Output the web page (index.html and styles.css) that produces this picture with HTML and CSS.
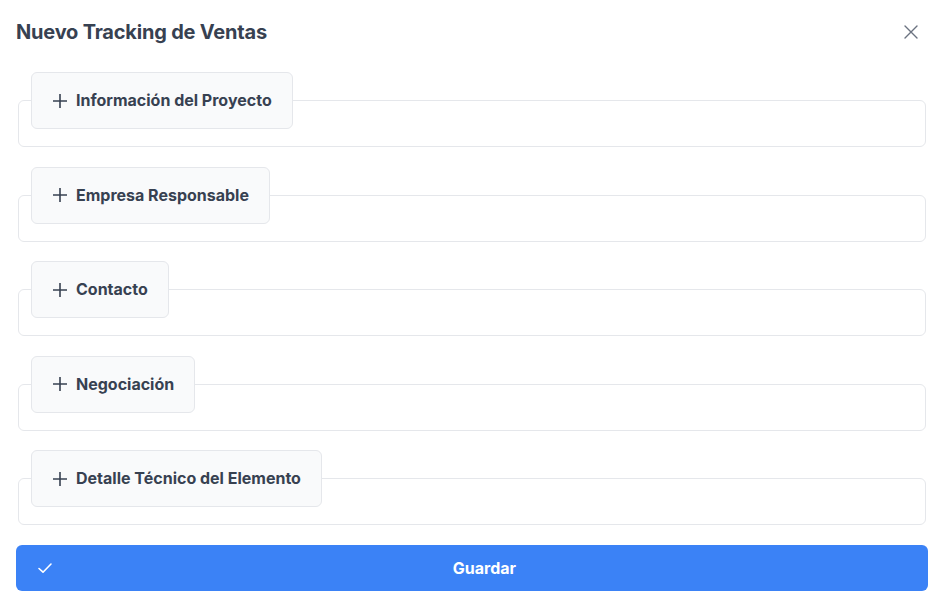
FILE: index.html
```html
<!DOCTYPE html>
<html lang="es">
<head>
<meta charset="utf-8">
<title>Nuevo Tracking de Ventas</title>
<link rel="stylesheet" href="styles.css">
</head>
<body>
<div class="dialog">
  <header class="dialog-header">
    <h1 class="dialog-title">Nuevo Tracking de Ventas</h1>
    <button class="close-btn" aria-label="Cerrar">
      <svg width="14" height="14" viewBox="0 0 14 14"><path d="M1 1L13 13M13 1L1 13" stroke="currentColor" stroke-width="1.4" stroke-linecap="round"/></svg>
    </button>
  </header>
  <div class="dialog-content">
    <fieldset class="panel"><legend class="panel-legend"><svg class="plus" width="16" height="16" viewBox="0 0 16 16"><path d="M8 1V15M1 8H15" stroke="currentColor" stroke-width="1.6"/></svg><span>Información del Proyecto</span></legend></fieldset>
    <fieldset class="panel"><legend class="panel-legend"><svg class="plus" width="16" height="16" viewBox="0 0 16 16"><path d="M8 1V15M1 8H15" stroke="currentColor" stroke-width="1.6"/></svg><span>Empresa Responsable</span></legend></fieldset>
    <fieldset class="panel"><legend class="panel-legend"><svg class="plus" width="16" height="16" viewBox="0 0 16 16"><path d="M8 1V15M1 8H15" stroke="currentColor" stroke-width="1.6"/></svg><span>Contacto</span></legend></fieldset>
    <fieldset class="panel"><legend class="panel-legend"><svg class="plus" width="16" height="16" viewBox="0 0 16 16"><path d="M8 1V15M1 8H15" stroke="currentColor" stroke-width="1.6"/></svg><span>Negociación</span></legend></fieldset>
    <fieldset class="panel"><legend class="panel-legend"><svg class="plus" width="16" height="16" viewBox="0 0 16 16"><path d="M8 1V15M1 8H15" stroke="currentColor" stroke-width="1.6"/></svg><span>Detalle Técnico del Elemento</span></legend></fieldset>
    <button class="save-btn">
      <svg class="check" width="16" height="16" viewBox="0 0 16 16"><path d="M2 8.5L6 12.2L14 4" stroke="currentColor" stroke-width="1.6" fill="none" stroke-linecap="round" stroke-linejoin="round"/></svg>
      <span class="save-label">Guardar</span>
    </button>
  </div>
</div>
</body>
</html>
```

FILE: styles.css
```css
* { box-sizing: border-box; }
html, body { margin: 0; padding: 0; background: #ffffff; }
body {
  font-family: Inter, "Noto Sans", "Liberation Sans", sans-serif;
  color: #374151;
  width: 944px;
  height: 614px;
  overflow: hidden;
}
.dialog { padding: 0 16px; }
.dialog-header {
  display: flex;
  align-items: center;
  justify-content: space-between;
  height: 64px;
  margin-bottom: 8px;
}
.dialog-title {
  margin: 0;
  font-size: 20px;
  font-weight: 700;
  color: #374151;
  letter-spacing: -0.2px;
}
.close-btn {
  border: 0;
  background: transparent;
  color: #6b7280;
  width: 32px;
  height: 32px;
  display: flex;
  align-items: center;
  justify-content: center;
  padding: 0;
  margin-right: 1px;
}
.dialog-content { display: flex; flex-direction: column; }
.panel {
  margin: 0 2px 19.5px;
  padding: 0 12px 17px;
  border: 1px solid #e5e7eb;
  border-radius: 6px;
  min-height: 0;
}
.panel-legend {
  display: flex;
  align-items: center;
  gap: 8px;
  padding: 19px 20px;
  background: #f9fafb;
  border: 1px solid #e5e7eb;
  border-radius: 6px;
  font-size: 16px;
  font-weight: 700;
  line-height: 17px;
  color: #374151;
}
.plus { color: #374151; flex: none; }
.save-btn {
  height: 46px;
  width: 100%;
  border: 0;
  border-radius: 6px;
  background: #3b82f6;
  color: #ffffff;
  display: flex;
  align-items: center;
  gap: 8px;
  padding: 0 20px;
  font-family: inherit;
  font-size: 16px;
  font-weight: 700;
}
.check { flex: none; margin-left: 1px; }
.save-label { flex: 1; text-align: center; }
```
